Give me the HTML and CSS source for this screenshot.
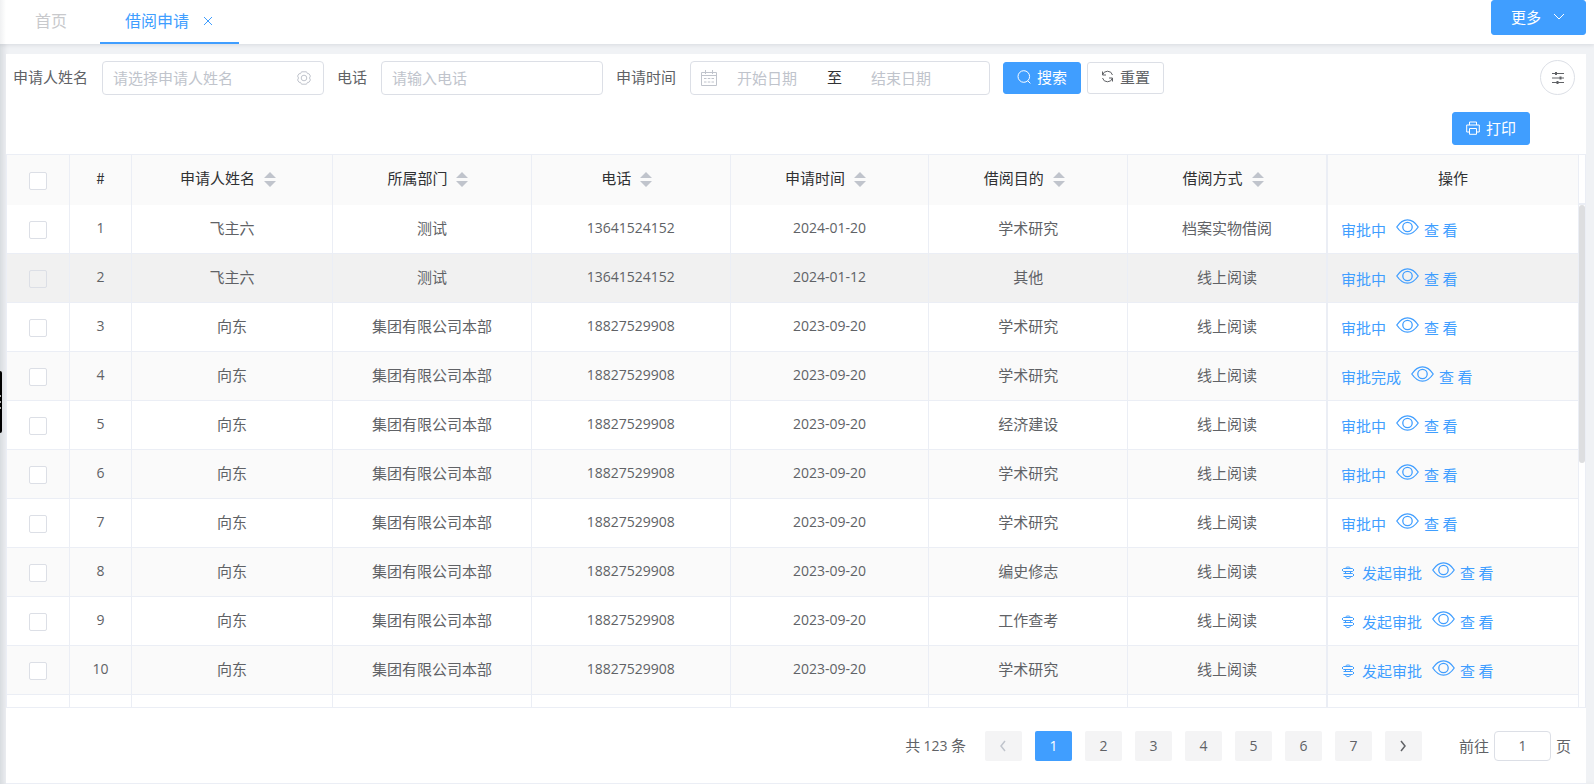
FILE: index.html
```html
<!DOCTYPE html>
<html lang="zh-CN">
<head>
  <meta charset="UTF-8">
  <title>借阅申请</title>
  <link rel="stylesheet" href="styles.css">
</head>
<body>
  <svg class="sprite" aria-hidden="true">
    <symbol id="i-eye" viewBox="0 0 23 16"><path d="M.8 8C4 3.200 7.500.9 11.500.9S19 3.200 22.200 8C19 12.800 15.500 15.100 11.500 15.100S4 12.800.8 8Z"/><circle cx="11.500" cy="8" r="4.700"/></symbol>
    <symbol id="i-flow" viewBox="0 0 14 14"><path d="M4.500 2.500C4.500.5 9.500.5 9.500 2.500M2.500 2.500h9l1.500 1.500-1.500 1.500h-9L1 4zM4.500 5.500v2M9.500 5.500v2M2.500 7.500h9L13 9l-1.500 1.500h-9M4.500 10.500c0 2.800 5 2.800 5 0"/></symbol>
    <symbol id="i-sort" viewBox="0 0 12 16"><path d="M6 0l6 6H0zM6 15l6-6H0z"/></symbol>
  </svg>

  <header class="topbar">
    <nav class="tabs">
      <a href="#" class="tab">首页</a>
      <a href="#" class="tab active">借阅申请
        <svg class="close" viewBox="0 0 10 10"><path d="M1 1l8 8M9 1L1 9"/></svg>
      </a>
    </nav>
    <button type="button" class="btn primary more">更多
      <svg width="12" height="8" viewBox="0 0 12 8"><path d="M1 1l5 5 5-5"/></svg>
    </button>
  </header>

  <div class="drawer-handle"><i></i><i></i><i></i></div>

  <main class="panel">
    <form class="search">
      <label for="name">申请人姓名</label>
      <div class="field">
        <input type="text" id="name" placeholder="请选择申请人姓名">
        <svg width="14" height="14" viewBox="0 0 14 14"><path d="M4.500.8h5l1 1.900h1.500L13.400 5l-.9 2 .9 2-1.400 2.300h-1.500l-1 1.900h-5l-1-1.900H2L.6 9l.9-2-.9-2L2 2.700h1.500z"/><circle cx="7" cy="7" r="2.800"/></svg>
      </div>
      <label for="phone">电话</label>
      <div class="field">
        <input type="text" id="phone" placeholder="请输入电话">
      </div>
      <label for="start">申请时间</label>
      <div class="field range">
        <svg width="16" height="16" viewBox="0 0 16 16"><path d="M.5 2.500h15v13H.5zM.5 5.500h15M4.500 0v4M11.500 0v4M3 8.500h2.500M6.800 8.500h2.500M10.500 8.500H13M3 12h2.500M6.800 12h2.500M10.500 12H13"/></svg>
        <input type="text" id="start" placeholder="开始日期">
        <span>至</span>
        <input type="text" id="end" placeholder="结束日期" aria-label="结束日期">
      </div>
      <button type="button" class="btn primary">
        <svg width="14" height="14" viewBox="0 0 14 14"><circle cx="6.800" cy="6.500" r="5.800"/><path d="M10.800 10.800l2.600 2.600"/></svg>搜索
      </button>
      <button type="reset" class="btn reset">
        <svg width="13" height="13" viewBox="0 0 13 13"><path d="M1.500 5A5.200 5.200 0 0 1 11.500 5M1.500 1.500V5H5M11.500 8A5.200 5.200 0 0 1 1.500 8M11.500 11.500V8H8"/></svg>重置
      </button>
      <button type="button" class="btn round" aria-label="筛选">
        <svg width="12" height="12" viewBox="0 0 12 12"><path d="M0 1.500h12M0 6h12M0 10.500h12"/><path class="knob" d="M4 0v3M8.500 4.500v3M5.500 9v3"/></svg>
      </button>
    </form>

    <div class="actions">
      <button type="button" class="btn primary print">
        <svg width="14" height="14" viewBox="0 0 14 14"><path d="M3.500 4V1h7v3M3.500 11H.7V4h12.600v7h-2.800M3.500 7.500h7v5.800h-7z"/></svg>打印
      </button>
    </div>

    <div class="table-box">
      <div class="table-wrap">
        <table>
          <colgroup>
            <col class="c-check"><col class="c-index"><col class="c-name"><col><col><col><col><col><col class="c-op">
          </colgroup>
          <thead>
            <tr>
              <th><input type="checkbox" aria-label="全选"></th>
              <th>#</th>
              <th>申请人姓名<svg class="sort"><use href="#i-sort"/></svg></th>
              <th>所属部门<svg class="sort"><use href="#i-sort"/></svg></th>
              <th>电话<svg class="sort"><use href="#i-sort"/></svg></th>
              <th>申请时间<svg class="sort"><use href="#i-sort"/></svg></th>
              <th>借阅目的<svg class="sort"><use href="#i-sort"/></svg></th>
              <th>借阅方式<svg class="sort"><use href="#i-sort"/></svg></th>
              <th>操作</th>
            </tr>
          </thead>
          <tbody>
            <tr>
              <td><input type="checkbox" aria-label="选择第1行"></td><td class="num">1</td><td>飞主六</td><td>测试</td><td class="num">13641524152</td><td class="num">2024-01-20</td><td>学术研究</td><td>档案实物借阅</td>
              <td><div class="ops"><a href="#">审批中</a><a href="#" class="view"><svg class="eye"><use href="#i-eye"/></svg>查 看</a></div></td>
            </tr>
            <tr class="hover">
              <td><input type="checkbox" aria-label="选择第2行"></td><td class="num">2</td><td>飞主六</td><td>测试</td><td class="num">13641524152</td><td class="num">2024-01-12</td><td>其他</td><td>线上阅读</td>
              <td><div class="ops"><a href="#">审批中</a><a href="#" class="view"><svg class="eye"><use href="#i-eye"/></svg>查 看</a></div></td>
            </tr>
            <tr>
              <td><input type="checkbox" aria-label="选择第3行"></td><td class="num">3</td><td>向东</td><td>集团有限公司本部</td><td class="num">18827529908</td><td class="num">2023-09-20</td><td>学术研究</td><td>线上阅读</td>
              <td><div class="ops"><a href="#">审批中</a><a href="#" class="view"><svg class="eye"><use href="#i-eye"/></svg>查 看</a></div></td>
            </tr>
            <tr>
              <td><input type="checkbox" aria-label="选择第4行"></td><td class="num">4</td><td>向东</td><td>集团有限公司本部</td><td class="num">18827529908</td><td class="num">2023-09-20</td><td>学术研究</td><td>线上阅读</td>
              <td><div class="ops"><a href="#">审批完成</a><a href="#" class="view"><svg class="eye"><use href="#i-eye"/></svg>查 看</a></div></td>
            </tr>
            <tr>
              <td><input type="checkbox" aria-label="选择第5行"></td><td class="num">5</td><td>向东</td><td>集团有限公司本部</td><td class="num">18827529908</td><td class="num">2023-09-20</td><td>经济建设</td><td>线上阅读</td>
              <td><div class="ops"><a href="#">审批中</a><a href="#" class="view"><svg class="eye"><use href="#i-eye"/></svg>查 看</a></div></td>
            </tr>
            <tr>
              <td><input type="checkbox" aria-label="选择第6行"></td><td class="num">6</td><td>向东</td><td>集团有限公司本部</td><td class="num">18827529908</td><td class="num">2023-09-20</td><td>学术研究</td><td>线上阅读</td>
              <td><div class="ops"><a href="#">审批中</a><a href="#" class="view"><svg class="eye"><use href="#i-eye"/></svg>查 看</a></div></td>
            </tr>
            <tr>
              <td><input type="checkbox" aria-label="选择第7行"></td><td class="num">7</td><td>向东</td><td>集团有限公司本部</td><td class="num">18827529908</td><td class="num">2023-09-20</td><td>学术研究</td><td>线上阅读</td>
              <td><div class="ops"><a href="#">审批中</a><a href="#" class="view"><svg class="eye"><use href="#i-eye"/></svg>查 看</a></div></td>
            </tr>
            <tr>
              <td><input type="checkbox" aria-label="选择第8行"></td><td class="num">8</td><td>向东</td><td>集团有限公司本部</td><td class="num">18827529908</td><td class="num">2023-09-20</td><td>编史修志</td><td>线上阅读</td>
              <td><div class="ops"><a href="#"><svg class="flow"><use href="#i-flow"/></svg>发起审批</a><a href="#" class="view"><svg class="eye"><use href="#i-eye"/></svg>查 看</a></div></td>
            </tr>
            <tr>
              <td><input type="checkbox" aria-label="选择第9行"></td><td class="num">9</td><td>向东</td><td>集团有限公司本部</td><td class="num">18827529908</td><td class="num">2023-09-20</td><td>工作查考</td><td>线上阅读</td>
              <td><div class="ops"><a href="#"><svg class="flow"><use href="#i-flow"/></svg>发起审批</a><a href="#" class="view"><svg class="eye"><use href="#i-eye"/></svg>查 看</a></div></td>
            </tr>
            <tr>
              <td><input type="checkbox" aria-label="选择第10行"></td><td class="num">10</td><td>向东</td><td>集团有限公司本部</td><td class="num">18827529908</td><td class="num">2023-09-20</td><td>学术研究</td><td>线上阅读</td>
              <td><div class="ops"><a href="#"><svg class="flow"><use href="#i-flow"/></svg>发起审批</a><a href="#" class="view"><svg class="eye"><use href="#i-eye"/></svg>查 看</a></div></td>
            </tr>
            <tr><td></td><td></td><td></td><td></td><td></td><td></td><td></td><td></td><td></td></tr>
          </tbody>
        </table>
      </div>
      <div class="gutter">
        <div class="gutter-head"></div>
        <div class="thumb"></div>
      </div>
    </div>

    <div class="pager">
      <span class="total">共 <b>123</b> 条</span>
      <div class="pages">
        <button type="button" disabled aria-label="上一页"><svg width="8" height="12" viewBox="0 0 8 12"><path d="M6 1L2 6l4 5"/></svg></button>
        <button type="button" class="current">1</button>
        <button type="button">2</button>
        <button type="button">3</button>
        <button type="button">4</button>
        <button type="button">5</button>
        <button type="button">6</button>
        <button type="button">7</button>
        <button type="button" aria-label="下一页"><svg width="8" height="12" viewBox="0 0 8 12"><path d="M2 1l4 5-4 5"/></svg></button>
      </div>
      <label for="jump">前往</label>
      <input type="text" id="jump" value="1">
      <span>页</span>
    </div>
  </main>
</body>
</html>
```

FILE: styles.css
```css
* { box-sizing: border-box; }
body { margin: 0; height: 100vh; display: flex; flex-direction: column; background: #f0f2f5;
       font: 15px/20px "Noto Sans CJK SC", sans-serif; color: #606266; overflow: hidden;
       box-shadow: inset 6px 0 6px -3px rgba(0,21,41,0.12); }
svg { fill: none; stroke: currentColor; flex: none; }
a { color: #409eff; text-decoration: none; }
input, button { font: inherit; color: inherit; }
.sprite { display: none; }

/* top tabs */
.topbar { display: flex; justify-content: space-between; align-items: flex-start; flex: none;
          height: 44px; padding-right: 8px;
          background: linear-gradient(to right, #f0f1f2, #fff 6px);
          box-shadow: 0 1px 4px rgba(0,21,41,0.1); }
.tabs { display: flex; height: 100%; }
.tab { display: flex; align-items: center; padding: 0 33px 4px 35px; font-size: 16px; color: #c8c9cc; }
.tab.active { padding: 0 26px 2px 25px; color: #409eff; border-bottom: 2px solid #409eff; }
.close { width: 10px; height: 10px; margin: 2px 0 0 14px; }

.btn { display: inline-flex; align-items: center; justify-content: center; height: 32px; padding: 0 13px 2px;
       gap: 6px; border: 1px solid #dcdfe6; border-radius: 3px; background: #fff; cursor: pointer; }
.btn.primary { background: #409eff; border-color: #409eff; color: #fff; }
.btn.more { height: 35px; padding: 0 20px 2px 19px; gap: 12px; }

.drawer-handle { position: absolute; left: 0; top: 371px; width: 2px; height: 62px; background: #000;
                 border-radius: 0 2px 2px 0; display: flex; flex-direction: column;
                 justify-content: center; gap: 4px; }
.drawer-handle i { width: 1px; height: 2px; background: #aaa; }

.panel { flex: 1; min-height: 0; display: flex; flex-direction: column; margin: 10px 8px 0 6px;
         background: #fff; border-bottom: 1px solid #ebeef5; }

/* search form */
.search { display: flex; align-items: center; padding: 6px 11px 0 7px; }
.search label { flex: none; margin-right: 14px; padding-bottom: 2px; }
.field { display: flex; align-items: center; width: 222px; height: 34px; margin-right: 13px;
         padding: 0 12px 0 10px; border: 1px solid #dcdfe6; border-radius: 4px; color: #c0c4cc; }
.field input { flex: 1; min-width: 0; padding: 0; border: 0; outline: 0; background: none; color: #606266; }
.field input::placeholder { color: #c0c4cc; }
.range { width: 300px; }
.range input { flex: none; width: 90px; margin-left: 20px; }
.range span { color: #303133; padding-bottom: 2px; }
.range span + input { margin-left: 29px; }
.reset { margin-left: 6px; }
.btn.round { width: 35px; height: 35px; padding: 0; margin-left: auto; border-radius: 50%; }
.round .knob { stroke-width: 2; }
.actions { display: flex; justify-content: flex-end; padding: 17px 56px 9px; }
.btn.print { height: 33px; }

/* table */
.table-box { flex: 1; min-height: 0; display: flex; border: 1px solid #ebeef5; }
.table-wrap { flex: 1; overflow: hidden; }
table { width: 100%; table-layout: fixed; border-collapse: separate; border-spacing: 0; }
.c-check { width: 63px; }
.c-index { width: 62px; }
.c-name { width: 201px; }
.c-op { width: 252px; }
th, td { padding: 0 0 2px; height: 49px; text-align: center; border-right: 1px solid #ebeef5; border-bottom: 1px solid #ebeef5; }
th { height: 50px; padding-bottom: 4px; background: #fafafa; color: #303133; font-weight: normal; border-bottom: 0; }
tbody tr:nth-child(even) td { background: #fafafa; }
tbody tr.hover td { background: #f1f1f1; }
th:last-child, td:last-child { border-left: 1px solid #ebeef5; }
.num { font-family: "Open Sans", sans-serif; font-size: 14px; }
.sort { width: 12px; height: 16px; margin: 0 8px 0 9px; vertical-align: middle; fill: #c0c4cc; stroke: none; }
input[type=checkbox] { appearance: none; display: block; width: 18px; height: 18px; margin: 4px auto 0;
                       border: 1px solid #dcdfe6; border-radius: 2px; background: #fff; }
th input[type=checkbox] { margin-top: 6px; }
tr.hover input[type=checkbox] { background: #f1f1f1; }
.ops { display: flex; gap: 10px; padding: 3px 0 0 13px; }
.ops a { display: flex; align-items: center; }
.eye { width: 23px; height: 16px; margin: 0 5px 6px 0; stroke-width: 1.3; }
.flow { width: 14px; height: 14px; margin-right: 7px; }
.gutter { width: 6px; flex: none; }
.gutter-head { height: 50px; border-bottom: 2px solid #ebeef5; }
.thumb { height: 258px; border-radius: 3px; background: #dddee0; }

/* pagination */
.pager { display: flex; align-items: center; justify-content: flex-end; flex: none; height: 75px; padding-right: 15px; }
.pager b, .pages, #jump { font-family: "Open Sans", sans-serif; font-weight: normal; font-size: 14px; }
.total { margin-right: 19px; }
.pages { display: flex; gap: 13px; margin-right: 37px; }
.pages button { display: flex; align-items: center; justify-content: center; width: 37px; height: 30px;
                padding: 0; border: 0; border-radius: 2px; background: #f4f4f5; cursor: pointer; }
.pages svg { stroke-width: 1.5; }
.pages button:disabled { color: #c0c4cc; }
.pages .current { background: #409eff; color: #fff; }
#jump { width: 57px; height: 30px; margin: 0 5px; padding: 0; text-align: center; border: 1px solid #dcdfe6; border-radius: 4px; }
```
